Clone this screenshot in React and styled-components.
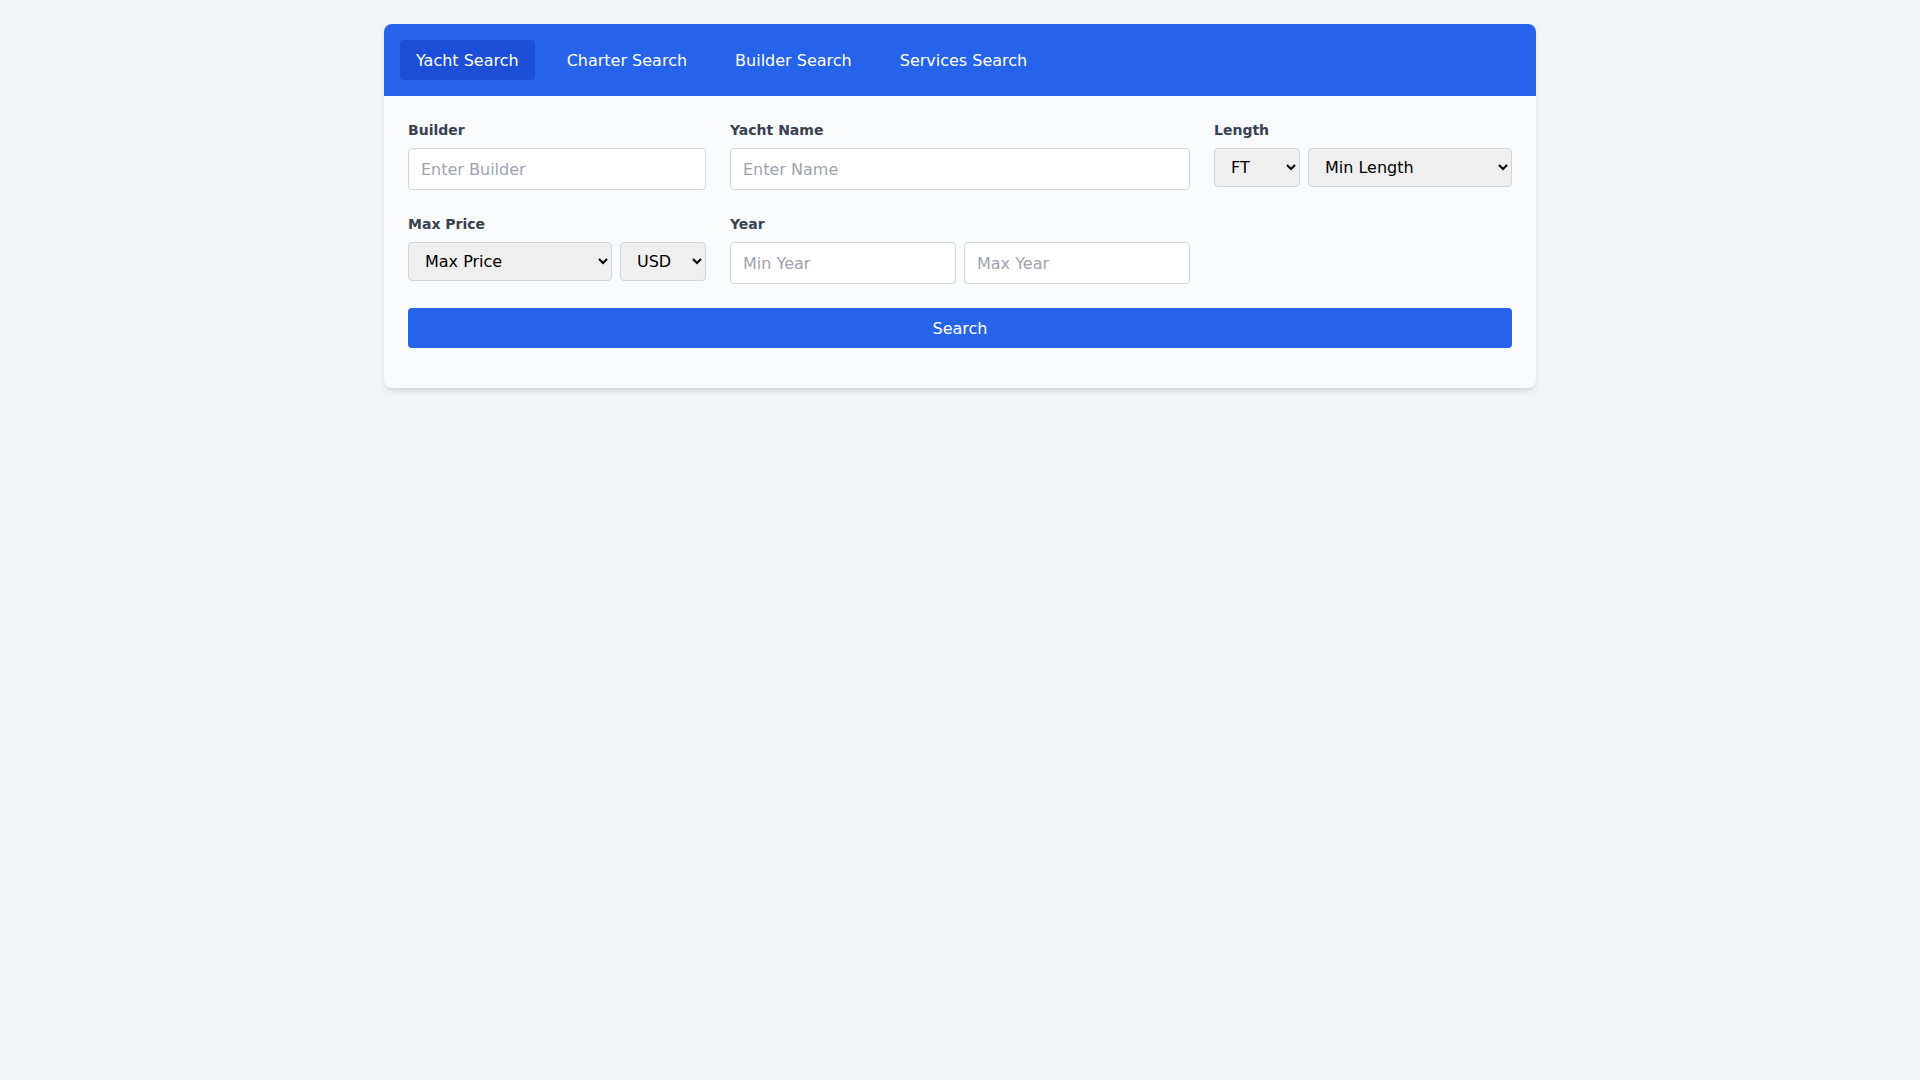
import React, { useState } from 'react';
import styled, { createGlobalStyle } from 'styled-components';

const Global = createGlobalStyle`
  body {
    margin: 0;
    background: #f3f4f6;
    font-family: "DejaVu Sans", "Noto Sans", sans-serif;
  }
`;

const Page = styled.div`
  padding-top: 24px;
  min-height: 100vh;
  box-sizing: border-box;
`;

const Card = styled.div`
  width: 1152px;
  margin: 0 auto;
  background: #f9fafb;
  border-radius: 8px;
  overflow: hidden;
  box-shadow: 0 4px 6px -1px rgba(0, 0, 0, 0.1), 0 2px 4px -2px rgba(0, 0, 0, 0.1);
`;

const TabBar = styled.div`
  background: #2563eb;
  display: flex;
  gap: 16px;
  padding: 16px;
`;

const Tab = styled.button`
  border: none;
  cursor: pointer;
  font-family: inherit;
  font-size: 16px;
  color: #fff;
  height: 40px;
  padding: 0 16px;
  border-radius: 4px;
  background: ${p => (p.$active ? '#1d4ed8' : 'transparent')};
`;

const Form = styled.div`
  padding: 24px 24px 40px;
  display: grid;
  grid-template-columns: repeat(3, 1fr);
  column-gap: 24px;
  row-gap: 24px;
`;

const Field = styled.div`
  display: flex;
  flex-direction: column;
  gap: 8px;
`;

const Label = styled.label`
  font-size: 14px;
  font-weight: bold;
  color: #374151;
  line-height: 20px;
`;

const Row = styled.div`
  display: flex;
  gap: 8px;
`;

const Input = styled.input`
  flex: 1;
  min-width: 0;
  height: 42px;
  box-sizing: border-box;
  padding: 0 12px;
  border: 1px solid #d1d5db;
  border-radius: 4px;
  background: #fff;
  font-family: inherit;
  font-size: 16px;
  color: #111827;
  &::placeholder { color: #9ca3af; }
`;

const Select = styled.select`
  flex: ${p => (p.$w ? `0 0 ${p.$w}px` : '1')};
  min-width: 0;
  height: 39px;
  box-sizing: border-box;
  padding: 0 12px;
  border: 1px solid #d1d5db;
  border-radius: 4px;
  background: #efefef;
  font-family: inherit;
  font-size: 16px;
  color: #000;
`;

const SearchButton = styled.button`
  grid-column: 1 / -1;
  height: 40px;
  border: none;
  border-radius: 4px;
  background: #2563eb;
  color: #fff;
  font-family: inherit;
  font-size: 16px;
  cursor: pointer;
`;

const tabs = ['Yacht Search', 'Charter Search', 'Builder Search', 'Services Search'];

export default function App() {
  const [active, setActive] = useState(0);
  return (
    <Page>
      <Global />
      <Card>
        <TabBar>
          {tabs.map((t, i) => (
            <Tab key={t} $active={i === active} onClick={() => setActive(i)}>{t}</Tab>
          ))}
        </TabBar>
        <Form>
          <Field>
            <Label>Builder</Label>
            <Row><Input placeholder="Enter Builder" /></Row>
          </Field>
          <Field>
            <Label>Yacht Name</Label>
            <Row><Input placeholder="Enter Name" /></Row>
          </Field>
          <Field>
            <Label>Length</Label>
            <Row>
              <Select $w={86}><option>FT</option><option>M</option></Select>
              <Select><option>Min Length</option></Select>
            </Row>
          </Field>
          <Field>
            <Label>Max Price</Label>
            <Row>
              <Select><option>Max Price</option></Select>
              <Select $w={86}><option>USD</option><option>EUR</option></Select>
            </Row>
          </Field>
          <Field>
            <Label>Year</Label>
            <Row>
              <Input placeholder="Min Year" />
              <Input placeholder="Max Year" />
            </Row>
          </Field>
          <div />
          <SearchButton>Search</SearchButton>
        </Form>
      </Card>
    </Page>
  );
}
